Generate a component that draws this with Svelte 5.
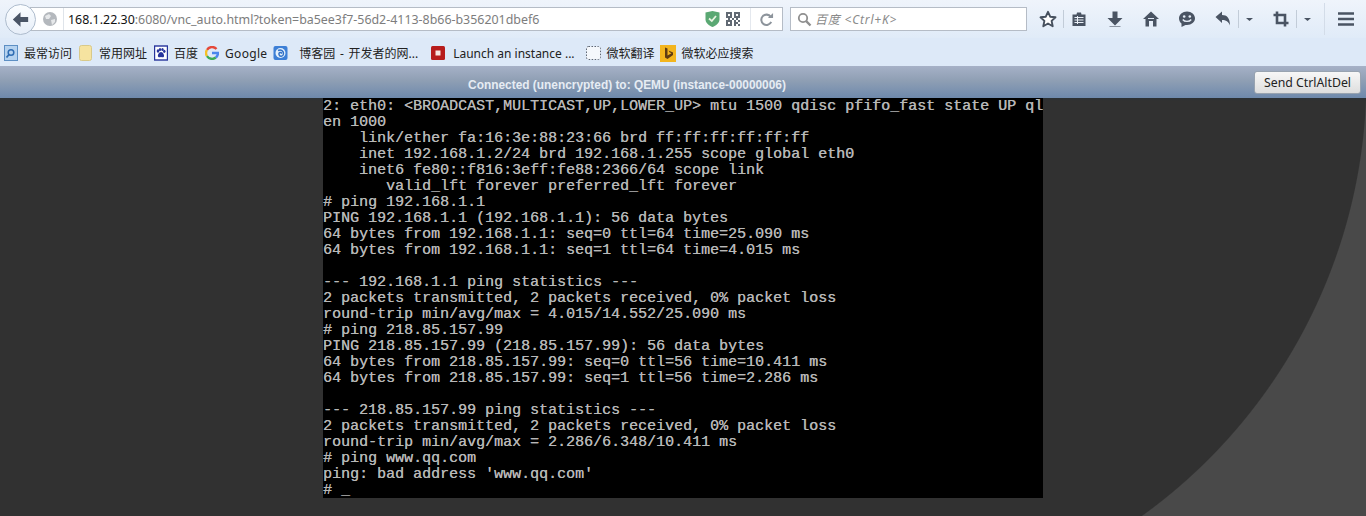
<script>
    const lines = [
        '2: eth0: <BROADCAST,MULTICAST,UP,LOWER_UP> mtu 1500 qdisc pfifo_fast state UP ql',
        'en 1000',
        '    link/ether fa:16:3e:88:23:66 brd ff:ff:ff:ff:ff:ff',
        '    inet 192.168.1.2/24 brd 192.168.1.255 scope global eth0',
        '    inet6 fe80::f816:3eff:fe88:2366/64 scope link',
        '       valid_lft forever preferred_lft forever',
        '# ping 192.168.1.1',
        'PING 192.168.1.1 (192.168.1.1): 56 data bytes',
        '64 bytes from 192.168.1.1: seq=0 ttl=64 time=25.090 ms',
        '64 bytes from 192.168.1.1: seq=1 ttl=64 time=4.015 ms',
        '',
        '--- 192.168.1.1 ping statistics ---',
        '2 packets transmitted, 2 packets received, 0% packet loss',
        'round-trip min/avg/max = 4.015/14.552/25.090 ms',
        '# ping 218.85.157.99',
        'PING 218.85.157.99 (218.85.157.99): 56 data bytes',
        '64 bytes from 218.85.157.99: seq=0 ttl=56 time=10.411 ms',
        '64 bytes from 218.85.157.99: seq=1 ttl=56 time=2.286 ms',
        '',
        '--- 218.85.157.99 ping statistics ---',
        '2 packets transmitted, 2 packets received, 0% packet loss',
        'round-trip min/avg/max = 2.286/6.348/10.411 ms',
        '# ping www.qq.com',
        "ping: bad address 'www.qq.com'",
        '# _'
    ];

    // qr icon cells, 7x7
    const qr = [
        '1110111',
        '1010101',
        '1110111',
        '0101010',
        '1110101',
        '1010110',
        '1110101'
    ];
</script>

<style>
    :global(body) {
        margin: 0;
        background: #313131;
    }
    .page {
        width: 1366px;
        height: 516px;
        overflow: hidden;
        display: flex;
        flex-direction: column;
        font-family: "Noto Sans", "Noto Sans CJK SC", sans-serif;
    }
    .nav {
        height: 38px;
        display: flex;
        align-items: center;
        padding-left: 5px;
        background: linear-gradient(#eff4fb, #e0ebf8);
    }
    .back {
        width: 31px;
        height: 31px;
        box-sizing: border-box;
        border: 1px solid #aebccd;
        border-radius: 50%;
        background: linear-gradient(#fbfdff, #e6eef8);
        display: flex;
        align-items: center;
        justify-content: center;
        position: relative;
        z-index: 1;
    }
    .urlbar {
        width: 753px;
        height: 24px;
        margin-left: -6px;
        box-sizing: border-box;
        border: 1px solid #b5bcc6;
        background: #fff;
        display: flex;
        align-items: center;
        padding-left: 11px;
    }
    .site {
        width: 16px;
        height: 16px;
    }
    .dividerurl {
        width: 1px;
        height: 22px;
        background: #dfe4ea;
        margin-left: 5px;
    }
    .url {
        margin-left: 4px;
        width: 637px;
        font-size: 12.42px;
        color: #7d7d7d;
        white-space: nowrap;
    }
    .url b {
        font-weight: 400;
        color: #111;
    }
    .qr {
        margin-left: 6px;
    }
    .dividerreload {
        width: 1px;
        height: 22px;
        background: #e4e8ee;
        margin-left: 10px;
    }
    .reload {
        margin-left: 8px;
    }
    .search {
        width: 237px;
        height: 24px;
        margin-left: 7px;
        box-sizing: border-box;
        border: 1px solid #b5bcc6;
        background: #fff;
        display: flex;
        align-items: center;
        padding-left: 6px;
        gap: 3px;
        font-size: 12px;
        font-style: italic;
        letter-spacing: .8px;
        color: #8a8a8a;
    }
    .tools {
        display: flex;
        align-items: center;
        height: 38px;
    }
    .tools svg {
        flex: none;
    }
    .sep {
        width: 1px;
        height: 18px;
        background: #c2ccd8;
    }
    .sep.tall {
        height: 32px;
        background: #d3dce8;
    }
    .ml6 { margin-left: 6px; }
    .ml12 { margin-left: 12px; }
    .ml13 { margin-left: 13px; }
    .ml18 { margin-left: 18px; }

    .bookmarks {
        height: 28px;
        display: flex;
        align-items: center;
        padding: 2px 0 0 4px;
        box-sizing: border-box;
        background: #dde9f8;
        font-size: 12px;
        color: #222;
    }
    .bm {
        display: flex;
        align-items: center;
        gap: 6px;
        white-space: nowrap;
    }
    .bm svg {
        flex: none;
    }
    .bm-folder { margin-left: 7px; gap: 7px; }
    .bm-paw { margin-left: 7px; }
    .bm-google { margin-left: 7px; letter-spacing: .3px; }
    .bm-blog { margin-left: 6px; gap: 11px; word-spacing: 1.5px; }
    .bm-launch { margin-left: 13px; gap: 8px; }
    .bm-translate { margin-left: 11px; gap: 6px; }
    .bm-bing { margin-left: 5px; gap: 6px; }

    .status {
        height: 32px;
        display: flex;
        align-items: center;
        background: linear-gradient(#a6b1c7, #8f9fb4 45%, #6e89ac);
    }
    .status-text {
        flex: 1;
        padding-top: 5px;
        text-align: center;
        font-family: "Liberation Sans", sans-serif;
        font-size: 11.9px;
        font-weight: 700;
        color: #e6ecf3;
    }
    .ctrl {
        width: 107px;
        height: 23px;
        margin: 0 5px 0 0;
        padding: 0;
        box-sizing: border-box;
        border: 1px solid #98a3b0;
        border-radius: 3px;
        background: linear-gradient(#f7f7f7, #dedede);
        font-family: "Noto Sans", sans-serif;
        font-size: 12.3px;
        color: #222;
    }

    .screen {
        flex: 1;
        display: flex;
        justify-content: center;
        align-items: flex-start;
        background:
            linear-gradient(#2b3135, #313131 3px, transparent 3px) no-repeat,
            linear-gradient(90deg, #313131 827px, transparent 827px) no-repeat,
            radial-gradient(circle 540px at 827px -20px, #313131 99.8%, #494949 100%);
    }
    .term {
        width: 720px;
        height: 400px;
        box-sizing: border-box;
        padding-top: 1px;
        overflow: hidden;
        background: #000;
        font-family: "Liberation Mono", monospace;
        font-size: 15px;
        color: #b8b8b8;
        text-shadow: .3px 0 0 #a8a8a8;
    }
    .row {
        height: 16px;
        line-height: 16px;
        white-space: pre;
    }
</style>

<div class="page">
    <div class="nav">
        <div class="back">
            <svg width="17" height="17" viewBox="0 0 20 20"><path d="M1 10 10 1.500 V7 H19 V13 H10 V18.500 Z" fill="#4a5566"/></svg>
        </div>
        <div class="urlbar">
            <svg class="site" viewBox="0 0 16 16"><circle cx="8" cy="8" r="7" fill="#b4b8bd"/><path d="M3 5 7 3 9 5 7 8 4 8ZM9 9 13 8 13 11 10 14Z" fill="#e6e8ea"/></svg>
            <div class="dividerurl"></div>
            <div class="url"><b>168.1.22.30</b>:6080/vnc_auto.html?token=ba5ee3f7-56d2-4113-8b66-b356201dbef6</div>
            <svg width="15" height="16" viewBox="0 0 15 16"><path d="M.5 1.500 7.500 0 14.500 1.500V8.500C14.500 12 11 14.500 7.500 16 4 14.500.5 12 .5 8.500Z" fill="#5aa873"/><path d="M4 7.500 6.800 10 11 5" fill="none" stroke="#e8f4e2" stroke-width="1.800"/></svg>
            <svg class="qr" width="14" height="14" viewBox="0 0 14 14">
                {#each qr as row, y}
                    {#each row.split('') as cell, x}
                        {#if cell === '1'}<rect x={x * 2} y={y * 2} width="2" height="2" fill="#626a74"/>{/if}
                    {/each}
                {/each}
            </svg>
            <div class="dividerreload"></div>
            <svg class="reload" width="15" height="15" viewBox="0 0 16 16"><path d="M12.500 5.200A5.500 5.500 0 1 0 13 10.500" fill="none" stroke="#8d949c" stroke-width="2.200"/><path d="M9.500 6.500H15V1Z" fill="#8d949c"/></svg>
        </div>
        <div class="search">
            <svg width="15" height="15" viewBox="0 0 15 15"><circle cx="6" cy="6" r="4.200" fill="none" stroke="#8f8f8f" stroke-width="1.800"/><path d="M9.200 9.200 13.500 13.500" stroke="#8f8f8f" stroke-width="2.400"/></svg>
            <span>百度 &lt;Ctrl+K&gt;</span>
        </div>
        <div class="tools">
            <svg class="ml12" width="18" height="18" viewBox="0 0 18 18"><path d="M9 1.800 11.200 6.700 16.500 7.300 12.600 10.900 13.700 16.200 9 13.500 4.300 16.200 5.400 10.900 1.500 7.300 6.800 6.700Z" fill="#fff" stroke="#46505e" stroke-width="1.900" stroke-linejoin="round"/></svg>
            <div class="sep ml6"></div>
            <svg class="ml6" width="18" height="18" viewBox="0 0 18 18"><path d="M2.500 4.500H6.500L7 2.500H11L11.500 4.500H15.500V16H2.500Z" fill="#4a5463"/><path d="M4.500 7.500H13.500M4.500 10H13.500M4.500 12.500H13.500M7.500 6V14" stroke="#eaf0f8" stroke-width="1"/></svg>
            <svg class="ml18" width="18" height="18" viewBox="0 0 18 18"><path d="M6.500 1.500H11.500V8H16.500L9 15.500 1.500 8H6.500Z" fill="#4a5463"/><path d="M3.500 16.500H14.500" stroke="#8c95a2" stroke-width="1"/></svg>
            <svg class="ml18" width="18" height="18" viewBox="0 0 18 18"><path d="M9 1.500 17 9H14.500V16.500H11V11H7V16.500H3.500V9H1Z" fill="#4a5463"/><path d="M6 8.500H12" stroke="#dfe8f4" stroke-width="1"/></svg>
            <svg class="ml18" width="18" height="18" viewBox="0 0 18 18"><path d="M9 1.500C13.500 1.500 17 4.500 17 8.300S13.500 15 9 15H7.500L3.500 17V13.600C1.900 12.400 1 10.500 1 8.300 1 4.500 4.500 1.500 9 1.500Z" fill="#4a5463"/><circle cx="6.200" cy="6.500" r="1.300" fill="#e6eef8"/><circle cx="11.800" cy="6.500" r="1.300" fill="#e6eef8"/><path d="M4.800 9.500C6.500 12 11.500 12 13.200 9.500" fill="none" stroke="#e6eef8" stroke-width="1.400"/></svg>
            <svg class="ml18" width="18" height="18" viewBox="0 0 18 18"><path d="M1.500 7 8 1.500V5C13 5 16 8 16 15.500 14.500 11.500 12 10 8 10V13Z" fill="#4a5463"/></svg>
            <div class="sep ml6"></div>
            <svg class="ml6" width="9" height="18" viewBox="0 0 9 18"><path d="M1 8H8L4.500 11Z" fill="#4a5463"/></svg>
            <svg class="ml18" width="18" height="18" viewBox="0 0 18 18"><path d="M5 1.500V13H16.500M1.500 5H13V16.500" fill="none" stroke="#4a5463" stroke-width="2.600"/></svg>
            <div class="sep ml6"></div>
            <svg class="ml6" width="9" height="18" viewBox="0 0 9 18"><path d="M1 8H8L4.500 11Z" fill="#4a5463"/></svg>
            <div class="sep tall ml12"></div>
            <svg class="ml13" width="16" height="18" viewBox="0 0 16 18"><path d="M0 3.500H16M0 9H16M0 14.500H16" stroke="#4a5463" stroke-width="2.600"/></svg>
        </div>
    </div>

    <div class="bookmarks">
        <div class="bm">
            <svg width="14" height="16" viewBox="0 0 14 16"><rect x=".5" y=".5" width="13" height="15" fill="#b5d2ef" stroke="#5d8fc4"/><circle cx="7" cy="7.500" r="2.800" fill="none" stroke="#2f6db3" stroke-width="1.500"/><path d="M5 9.500 2.500 12.500" stroke="#2f6db3" stroke-width="1.800"/></svg>
            <span>最常访问</span>
        </div>
        <div class="bm bm-folder">
            <svg width="13" height="16" viewBox="0 0 13 16"><rect x=".5" y=".5" width="12" height="15" rx="2" fill="#f6e3a0" stroke="#d8c98a"/></svg>
            <span>常用网址</span>
        </div>
        <div class="bm bm-paw">
            <svg width="14" height="16" viewBox="0 0 14 16"><rect x=".5" y="1" width="13" height="14" fill="#fff" stroke="#27349c" stroke-width="1.400"/><g fill="#27349c"><ellipse cx="4" cy="6" rx="1.300" ry="1.700"/><ellipse cx="6" cy="4.500" rx="1.200" ry="1.600"/><ellipse cx="8.500" cy="4.500" rx="1.200" ry="1.600"/><ellipse cx="10.300" cy="6.300" rx="1.200" ry="1.600"/><path d="M7 7C9 7 10.500 10 10 11.500 9 13 8 12 7 12S5 13 4 11.500C3.500 10 5 7 7 7Z"/></g></svg>
            <span>百度</span>
        </div>
        <div class="bm bm-google">
            <svg width="14" height="14" viewBox="0 0 14 14" fill="none" stroke-width="2.400"><path d="M11.500 3A6 6 0 0 0 2 3.800" stroke="#e5483a"/><path d="M2 3.800A6 6 0 0 0 2 10.200" stroke="#f4bf26"/><path d="M2 10.200A6 6 0 0 0 10.800 11.500" stroke="#3cab54"/><path d="M10.800 11.500A6 6 0 0 0 13 7H7" stroke="#4a87ee"/></svg>
            <span>Google</span>
        </div>
        <div class="bm bm-blog">
            <svg width="15" height="16" viewBox="0 0 15 16"><rect x=".5" y="1" width="14" height="14" rx="2" fill="#3d7fd6"/><circle cx="7.500" cy="8" r="5" fill="#e4f0fb"/><path d="M5 5.500C8 4 11 6 10.500 9S6.500 12 6 9.500 8 7 9 8.500" fill="none" stroke="#2f6fc6" stroke-width="1.400"/></svg>
            <span>博客园 - 开发者的网...</span>
        </div>
        <div class="bm bm-launch">
            <svg width="14" height="16" viewBox="0 0 14 16"><rect y="1" width="14" height="14" rx="1.500" fill="#b71c1c"/><rect x="4.500" y="5.500" width="5" height="5" fill="#f7e4e0"/></svg>
            <span>Launch an instance ...</span>
        </div>
        <div class="bm bm-translate">
            <svg width="15" height="16" viewBox="0 0 15 16"><rect x=".5" y="1.500" width="14" height="13" rx="2" fill="#f5f8fc" stroke="#5e6672" stroke-dasharray="1.500 1.500"/></svg>
            <span>微软翻译</span>
        </div>
        <div class="bm bm-bing">
            <svg width="16" height="17" viewBox="0 0 16 17"><rect width="16" height="17" fill="#f3b51e"/><path d="M5 2.500 7.500 3.500V10.500L11.500 8.200 9.500 7.300 8.500 5.500 13 7.500V10L7.500 14 5 12.500Z" fill="#5f3b12"/></svg>
            <span>微软必应搜索</span>
        </div>
    </div>

    <div class="status">
        <div class="status-text">Connected (unencrypted) to: QEMU (instance-00000006)</div>
        <button class="ctrl">Send CtrlAltDel</button>
    </div>

    <div class="screen">
        <div class="term">
            {#each lines as line}
                <div class="row">{line}</div>
            {/each}
        </div>
    </div>
</div>
